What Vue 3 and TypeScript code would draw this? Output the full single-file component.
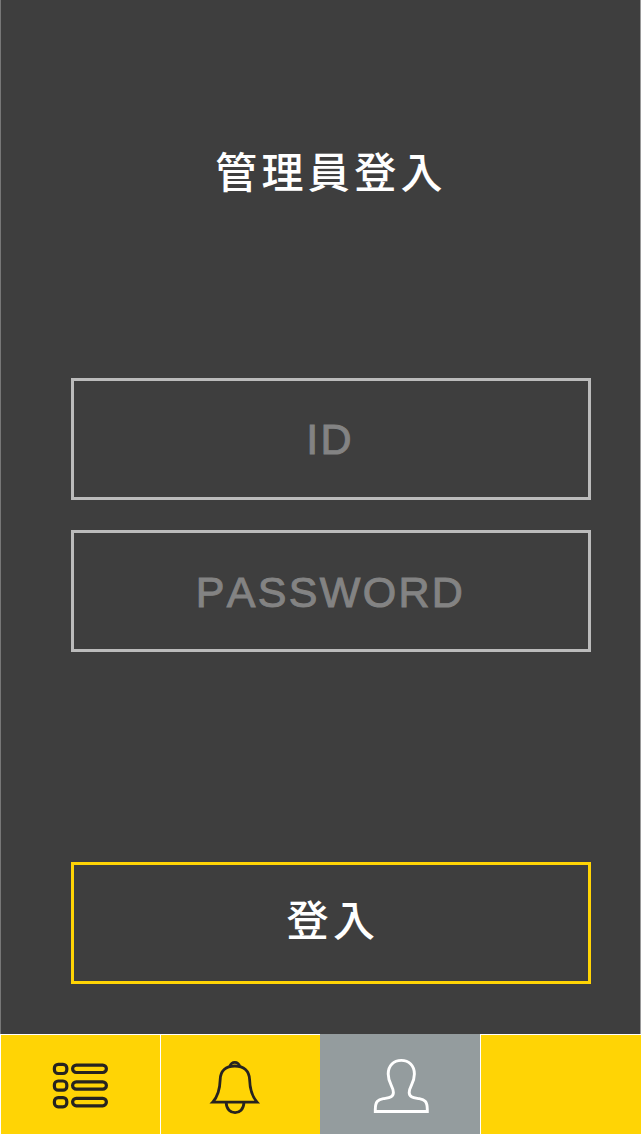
<script setup lang="ts">
import { ref } from 'vue'

type Tab = 'list' | 'alerts' | 'account' | 'blank'

const tabs: Tab[] = ['list', 'alerts', 'account', 'blank']
const active = ref<Tab>('account')
const id = ref('')
const password = ref('')
</script>

<template>
  <div class="screen">
    <form class="login" @submit.prevent>
      <h1 class="title">管理員登入</h1>
      <input v-model="id" class="field first" type="text" placeholder="ID" />
      <input v-model="password" class="field second" type="password" placeholder="PASSWORD" />
      <button class="submit" type="submit"><span>登入</span></button>
    </form>
    <nav class="tabs">
      <button
        v-for="tab in tabs"
        :key="tab"
        class="tab"
        :class="{ active: tab === active }"
        type="button"
        @click="active = tab"
      >
        <svg v-if="tab === 'list'" class="icon" viewBox="0 0 160 99">
          <g fill="none" stroke="#262320" stroke-width="3.2">
            <template v-for="y in [29.3, 46, 62.6]" :key="y">
              <rect x="53.4" :y="y" width="12.4" height="9.2" rx="3.8" />
              <rect x="71.6" :y="y + 0.8" width="33.8" height="7.4" rx="3.7" />
            </template>
          </g>
        </svg>
        <svg v-else-if="tab === 'alerts'" class="icon" viewBox="0 0 160 99">
          <g fill="none" stroke="#262320" stroke-width="2.8">
            <path d="M69 31.7C69.4 26 78.2 26 78.6 31.7" />
            <path d="M51.7 67.1C57.4 61 58.9 54 59.2 44.5C59.4 36 64.7 31 73.8 31C82.9 31 88.2 36 88.6 44.5C88.9 54 90.7 61 96 67.1Z" />
            <path d="M65.2 67.7C65.5 81 82.6 81 82.9 67.7" />
          </g>
        </svg>
        <svg v-else-if="tab === 'account'" class="icon" viewBox="0 0 160 99">
          <path
            d="M55.3 76.5V74.5C55.3 66 58.3 64.7 63.3 63.7C68.8 62.6 73.4 62.5 73.4 57.5C73.4 51.5 68.2 48.5 68.2 39C68.2 30.3 73.8 25.4 81.3 25.4C88.8 25.4 94.4 30.3 94.4 39C94.4 48.5 89.2 51.5 89.2 57.5C89.2 62.5 93.8 62.6 99.3 63.7C104.3 64.7 107.3 66 107.3 74.5V76.5Z"
            fill="none"
            stroke="#fff"
            stroke-width="2.9"
          />
        </svg>
      </button>
    </nav>
  </div>
</template>

<style>
body {
  margin: 0;
  background: #fff;
}
</style>

<style scoped>
.screen {
  width: 641px;
  height: 1136px;
  display: flex;
  flex-direction: column;
  overflow: hidden;
  background: #fff;
  font-family: "Liberation Sans", "Noto Sans CJK TC", sans-serif;
}
.login {
  box-sizing: border-box;
  height: 1034px;
  flex: none;
  display: flex;
  flex-direction: column;
  padding: 140px 49px 0 70px;
  border-left: 1px solid #777;
  border-right: 1px solid #999;
  background: #3e3e3e;
}
.title {
  margin: 0 0 178px 144px;
  height: 60px;
  font: 500 42px/60px "Noto Sans CJK TC", sans-serif;
  letter-spacing: 4.4px;
  white-space: nowrap;
  color: #fff;
}
.field,
.submit {
  box-sizing: border-box;
  display: block;
  flex: none;
  width: 520px;
  height: 122px;
  margin: 0;
  border: 3px solid #bbb;
  border-radius: 0;
  background: transparent;
  outline: none;
}
.field {
  padding: 3px 1px 0 0;
  font: 43px/60px "Liberation Sans", sans-serif;
  font-kerning: none;
  letter-spacing: 2.3px;
  text-align: center;
  color: #fff;
}
.field::placeholder {
  color: #838383;
  opacity: 1;
  -webkit-text-stroke: 1px #838383;
}
.first {
  padding: 1px 2px 0 0;
}
.second {
  margin-top: 30px;
}
.submit {
  margin-top: 210px;
  padding: 0 0 10px 4px;
  border-color: #ffd405;
  font: 500 42px/60px "Noto Sans CJK TC", sans-serif;
  letter-spacing: 4.4px;
  color: #fff;
}
.tabs {
  box-sizing: border-box;
  flex: none;
  width: 641px;
  height: 100px;
  padding: 1px 0 0 1px;
  display: grid;
  grid-template-columns: 159px 159px 159px 160px;
  column-gap: 1px;
  background: #fff;
}
.tab {
  min-width: 0;
  padding: 0;
  border: 0;
  background: #ffd405;
}
.tab.active {
  margin: -1px 0 0 -1px;
  padding-top: 1px;
  background: #949c9e;
}
.icon {
  display: block;
  width: 160px;
  height: 99px;
}
</style>
